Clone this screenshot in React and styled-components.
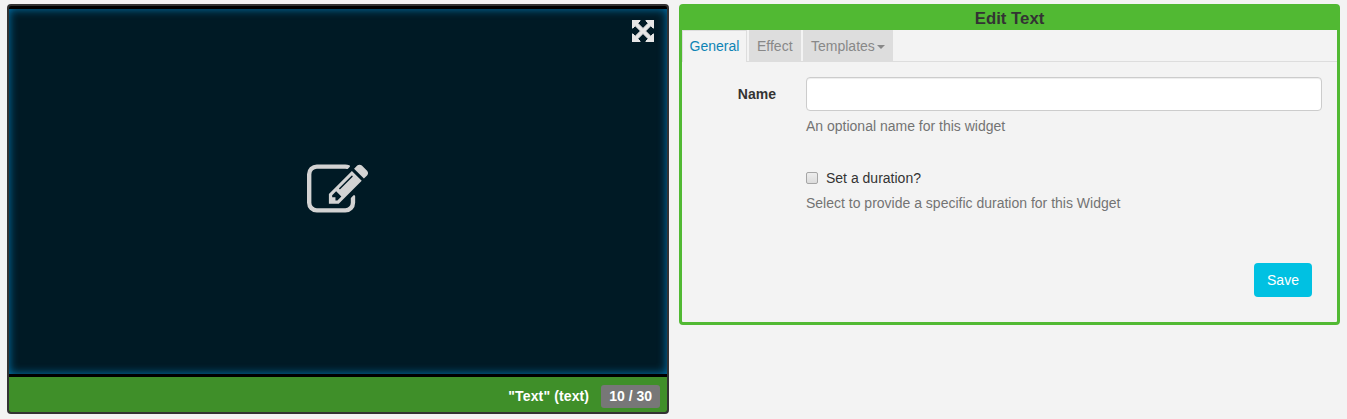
import React from "react";
import styled, { createGlobalStyle } from "styled-components";

const GlobalStyle = createGlobalStyle`
  *, *::before, *::after { box-sizing: border-box; }
  body {
    margin: 0;
    background: #f3f3f3;
    color: #333;
    font: 14px/20px "Liberation Sans", Arial, Helvetica, sans-serif;
  }
`;

const Editor = styled.main`
  display: flex;
  align-items: flex-start;
  gap: 10px;
  padding: 4px 7px 0;
  height: 419px;
  overflow: hidden;
`;

const Viewer = styled.section`
  display: flex;
  flex-direction: column;
  flex: none;
  width: 662px;
  height: 410px;
  border: 2px solid #333;
  border-radius: 4px;
  background: #000;
  overflow: hidden;
`;

const Stage = styled.div`
  position: relative;
  display: flex;
  align-items: center;
  justify-content: center;
  height: 365px;
  margin: 3px 0;
  background: #001a25;
  box-shadow: inset 0 0 10px #0076b0;
`;

const FullscreenButton = styled.button`
  position: absolute;
  top: 11px;
  right: 13px;
  display: flex;
  padding: 0;
  border: 0;
  background: none;
  color: #e6e6e6;
`;

const EditIcon = styled.svg`
  display: block;
  width: 61.3px;
  height: 61.3px;
  margin: -1.5px 0 0 -1.5px;
  fill: #d3d3d3;
`;

const StatusBar = styled.footer`
  display: flex;
  align-items: center;
  justify-content: flex-end;
  gap: 12px;
  flex: 1;
  padding: 3px 7px 0 0;
  background: #3f8f29;
  color: #fff;
  font-weight: bold;
`;

const WidgetName = styled.span`
  letter-spacing: 0.13px;
`;

const TimeBadge = styled.span`
  height: 23px;
  padding: 0 8px;
  border-radius: 3px;
  background: #777;
  line-height: 23px;
`;

const Panel = styled.section`
  flex: none;
  width: 661px;
  height: 321px;
  border: 3px solid #51b933;
  border-radius: 4px;
`;

const PanelTitle = styled.h1`
  height: 23px;
  margin: 0;
  background: #51b933;
  font-size: 16.8px;
  line-height: 23px;
  text-align: center;
`;

const Tabs = styled.nav`
  display: flex;
  gap: 2px;
  height: 32px;
  border-bottom: 1px solid #ddd;
`;

const Tab = styled.button`
  display: flex;
  align-items: center;
  height: ${({ $active }) => ($active ? "32px" : "31px")};
  width: ${({ $width }) => $width}px;
  padding: ${({ $active }) => ($active ? "0 0 1px 6.5px" : "1px 0 0 8px")};
  border: 0 solid #ddd;
  border-width: ${({ $active }) => ($active ? "1px 1px 0 1px" : "0")};
  background: ${({ $active }) => ($active ? "#f3f3f3" : "#ddd")};
  color: ${({ $active }) => ($active ? "#0e84b5" : "#888")};
  font: inherit;
`;

const Caret = styled.span`
  margin: 2px 0 0 2px;
  border: 4px solid transparent;
  border-top-color: currentColor;
  border-bottom: 0;
`;

const Form = styled.form`
  display: grid;
  grid-template-columns: 94px 516px;
  column-gap: 30px;
  padding-top: 15px;
`;

const FieldLabel = styled.label`
  padding-top: 7px;
  font-weight: bold;
  text-align: right;
`;

const TextInput = styled.input`
  display: block;
  width: 100%;
  height: 34px;
  padding: 6px 12px;
  border: 1px solid #ccc;
  border-radius: 4px;
  background: #fff;
  box-shadow: inset 0 1px 1px rgba(0, 0, 0, 0.075);
  font: inherit;
`;

const HelpText = styled.p`
  margin: 5px 0 0;
  color: #737373;
`;

const DurationField = styled.div`
  grid-column: 2;
  margin-top: 32px;
`;

const CheckLabel = styled.label`
  display: flex;
  align-items: center;
  gap: 8px;
`;

const Checkbox = styled.input`
  appearance: none;
  width: 12px;
  height: 12px;
  margin: 0;
  border: 1px solid #a6a6a6;
  border-radius: 2px;
  background: linear-gradient(#ededed, #dcdcdc);
`;

const SaveButton = styled.button`
  grid-column: 2;
  justify-self: end;
  width: 58px;
  height: 34px;
  margin: 50px 10px 0 0;
  padding: 0;
  border: 0;
  border-radius: 4px;
  background: #00c1e2;
  color: #fff;
  font: inherit;
`;

export default function App() {
  return (
    <>
      <GlobalStyle />
      <Editor>
        <Viewer>
          <Stage>
            <EditIcon viewBox="0 0 1792 1792">
              <path d="M888 1184l116-116-152-152-116 116v56h96v96h56zm440-720q-16-16-33 1l-350 350q-17 17-1 33t33-1l350-350q17-17 1-33zm80 594v190q0 119-84.5 203.5t-203.5 84.5h-832q-119 0-203.5-84.5t-84.5-203.5v-832q0-119 84.5-203.5t203.5-84.5h832q63 0 117 25 15 7 18 23 3 17-9 29l-49 49q-14 14-32 8-23-6-45-6h-832q-66 0-113 47t-47 113v832q0 66 47 113t113 47h832q66 0 113-47t47-113v-126q0-13 9-22l64-64q15-15 35-7t20 29zm-96-738l288 288-672 672h-288v-288zm444 132l-92 92-288-288 92-92q28-28 68-28t68 28l152 152q28 28 28 68t-28 68z" />
            </EditIcon>
            <FullscreenButton type="button" aria-label="Fullscreen">
              <svg width="22" height="22" viewBox="0 0 22 22" fill="currentColor" stroke="currentColor" strokeWidth="0.9">
                <path d="M0 0H8V1L5.8 3.2L11 8.4L16.2 3.2L14 1V0H22V8H21L18.8 5.8L13.6 11L18.8 16.2L21 14H22V22H14V21L16.2 18.8L11 13.6L5.8 18.8L8 21V22H0V14H1L3.2 16.2L8.4 11L3.2 5.8L1 8H0Z" />
              </svg>
            </FullscreenButton>
          </Stage>
          <StatusBar>
            <WidgetName>"Text" (text)</WidgetName>
            <TimeBadge>10 / 30</TimeBadge>
          </StatusBar>
        </Viewer>
        <Panel>
          <PanelTitle>Edit Text</PanelTitle>
          <Tabs>
            <Tab type="button" $active $width={65}>General</Tab>
            <Tab type="button" $width={52}>Effect</Tab>
            <Tab type="button" $width={90}>
              Templates
              <Caret />
            </Tab>
          </Tabs>
          <Form>
            <FieldLabel htmlFor="name">Name</FieldLabel>
            <div>
              <TextInput id="name" type="text" />
              <HelpText>An optional name for this widget</HelpText>
            </div>
            <DurationField>
              <CheckLabel>
                <Checkbox type="checkbox" />
                Set a duration?
              </CheckLabel>
              <HelpText>Select to provide a specific duration for this Widget</HelpText>
            </DurationField>
            <SaveButton type="button">Save</SaveButton>
          </Form>
        </Panel>
      </Editor>
    </>
  );
}
